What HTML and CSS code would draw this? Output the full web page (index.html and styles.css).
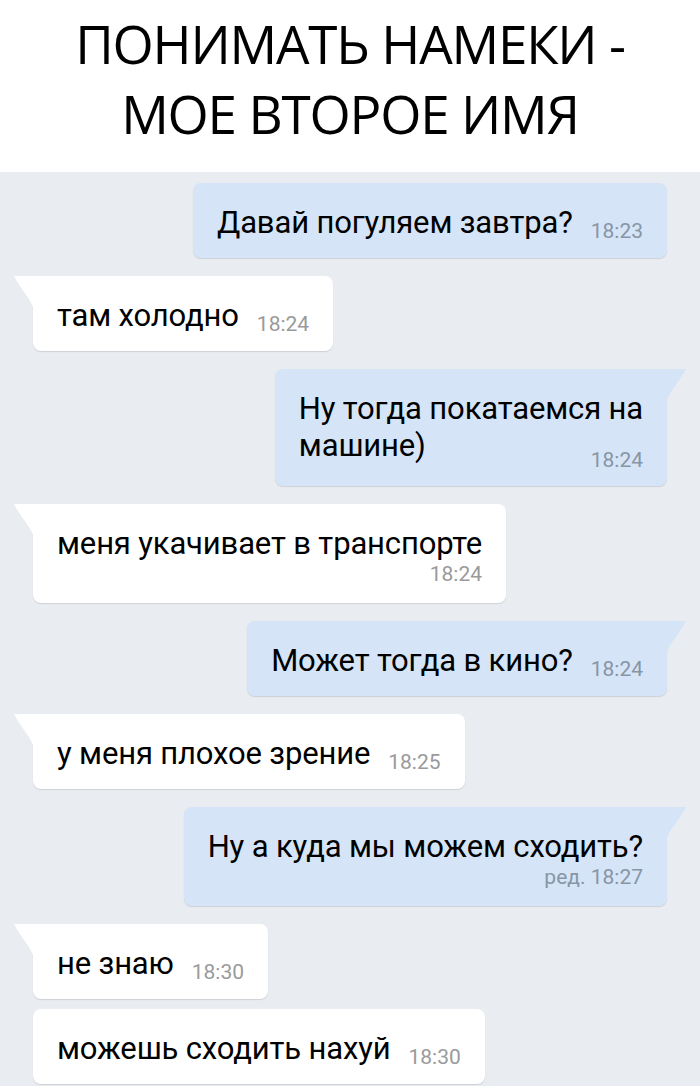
FILE: index.html
```html
<!DOCTYPE html>
<html lang="ru">
<head>
  <meta charset="UTF-8" />
  <title>Понимать намеки</title>
  <meta name="viewport" content="width=device-width, initial-scale=1.0" />
  <link rel="stylesheet" href="styles.css">
</head>
<body>

<header class="caption">
  <h1>ПОНИМАТЬ НАМЕКИ -<br>МОЕ ВТОРОЕ ИМЯ</h1>
</header>

<main class="chat">
  <div class="msg out">
    <span class="text">Давай погуляем завтра?</span><span class="time">18:23</span>
  </div>

  <div class="msg in tail">
    <span class="text">там холодно</span><span class="time">18:24</span>
  </div>

  <div class="msg out tail multi">
    <div class="text">Ну тогда покатаемся на</div>
    <div class="last">
      <span class="text">машине)</span><span class="time">18:24</span>
    </div>
  </div>

  <div class="msg in tail stacked">
    <div class="text">меня укачивает в транспорте</div>
    <div class="time">18:24</div>
  </div>

  <div class="msg out tail">
    <span class="text">Может тогда в кино?</span><span class="time">18:24</span>
  </div>

  <div class="msg in tail">
    <span class="text">у меня плохое зрение</span><span class="time">18:25</span>
  </div>

  <div class="msg out tail stacked">
    <div class="text">Ну а куда мы можем сходить?</div>
    <div class="time">ред. 18:27</div>
  </div>

  <div class="msg in tail">
    <span class="text">не знаю</span><span class="time">18:30</span>
  </div>

  <div class="msg in same">
    <span class="text">можешь сходить нахуй</span><span class="time">18:30</span>
  </div>
</main>

</body>
</html>
```

FILE: styles.css
```css
* { margin: 0; padding: 0; box-sizing: border-box; }

body {
  font-family: Roboto, "Noto Sans", sans-serif;
  background: #e9edf2;
  color: #000;
  width: 700px;
  min-height: 1086px;
}

.caption {
  background: #fff;
  height: 172px;
  padding-top: 9px;
  text-align: center;
}

.caption h1 {
  font-family: "Open Sans", "DejaVu Sans", sans-serif;
  font-weight: 400;
  font-size: 53px;
  line-height: 70px;
  letter-spacing: -1.2px;
}

.chat {
  display: flex;
  flex-direction: column;
  padding: 11px 33px 0 33px;
}

.msg {
  position: relative;
  margin-top: 18px;
  padding: 21px 24px 16px 24px;
  border-radius: 8px;
  font-size: 31px;
  line-height: 37px;
  letter-spacing: -0.15px;
  box-shadow: 0 1px 1px rgba(0, 0, 0, 0.12);
}

.msg:first-child { margin-top: 0; }
.msg.same { margin-top: 10px; }

.msg.in {
  align-self: flex-start;
  background: #fff;
}

.msg.out {
  align-self: flex-end;
  background: #d5e4f6;
}

.time {
  font-size: 21px;
  line-height: 1;
  letter-spacing: 0;
  margin-left: 18px;
  vertical-align: -5px;
  color: #9a9a9a;
}

.out .time { color: #8795a6; }

/* time under the text, right aligned */
.stacked .time {
  display: block;
  text-align: right;
  margin: 1px 0 2px 0;
  line-height: 22px;
}

/* time on the last line of a wrapped message */
.multi .last {
  display: flex;
  justify-content: space-between;
  align-items: flex-end;
}

.multi .last .text { margin-bottom: 6px; }
.multi .last .time { line-height: 20px; }

/* the little corner tail */
.tail::before {
  content: "";
  position: absolute;
  top: 0;
  width: 20px;
  height: 34px;
}

.in.tail { border-top-left-radius: 0; }
.out.tail { border-top-right-radius: 0; }

.in.tail::before {
  left: -19px;
  background: #fff;
  clip-path: path("M0 0 L20 0 L20 34 C18 24 7 14 0 0 Z");
}

.out.tail::before {
  right: -19px;
  background: #d5e4f6;
  clip-path: path("M20 0 L0 0 L0 34 C2 24 13 14 20 0 Z");
}
```
